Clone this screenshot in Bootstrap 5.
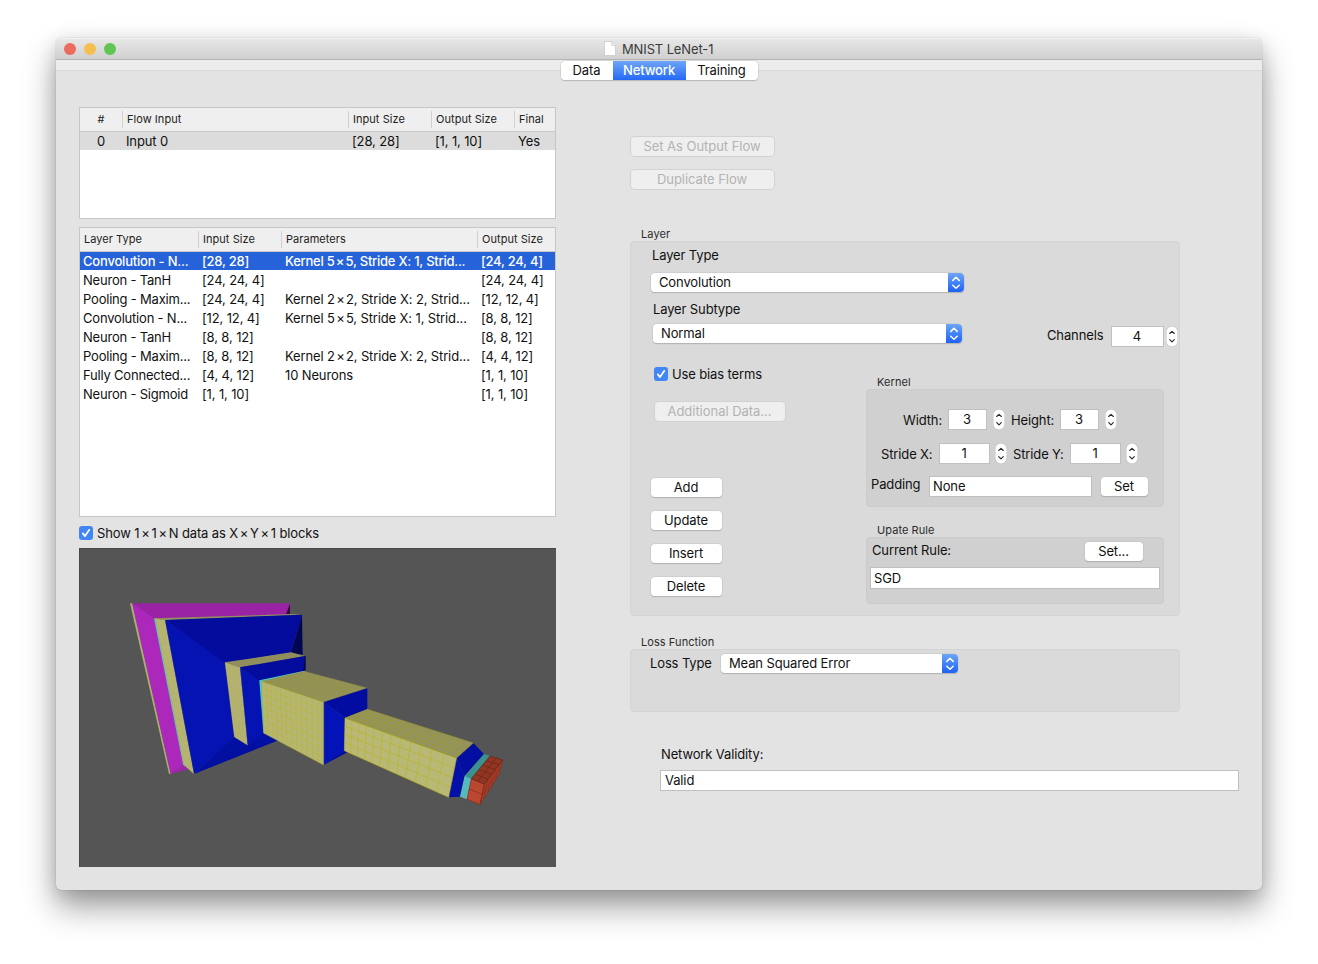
<!DOCTYPE html>
<html lang="en">
<head>
<meta charset="utf-8">
<title>MNIST LeNet-1</title>
<link href="https://cdn.jsdelivr.net/npm/bootstrap@5.3.0/dist/css/bootstrap.min.css" rel="stylesheet">
<style>
body{font:13px/18px Inter,"Liberation Sans",sans-serif;letter-spacing:-.13px;color:#111;background:#fff;height:964px;overflow:hidden;padding:38px 0 0 56px}
.win{width:1206px;height:852px;background:#e3e3e3;border-radius:5px;box-shadow:0 0 1px rgba(0,0,0,.4),0 17px 32px rgba(0,0,0,.38),0 4px 18px rgba(0,0,0,.12)}
.titlebar{height:22px;background:linear-gradient(#e8e8e8,#d0d0d0);border-bottom:1px solid #b4b4b4;border-radius:5px 5px 0 0;padding-left:8px;box-shadow:inset 0 1px #f3f3f3}
.dot{width:12px;height:12px;border-radius:50%}
.title{color:#3b3b3b;margin-left:488px}
.strip{height:11px;background:#ececec;border-bottom:1px solid #d8d8d8}
.seg{height:19px;margin-top:1px;background:#fff;border-radius:4px;box-shadow:0 0 0 .5px #c6c6c6,0 1px 1px rgba(0,0,0,.25);overflow:hidden;z-index:2}
.seg span{height:19px;line-height:19px;text-align:center}
.seg .on{background:linear-gradient(#6ea5f6,#2469f6);color:#fff;font-weight:500}
.left{width:477px;margin:36px 0 0 23px}
.right{width:609px;margin:66px 0 0 74px}
.grid-box{background:#fff;border:1px solid #c6c6c6}
.hd{height:24px;background:#efefef;border-bottom:1px solid #c8c8c8;font-size:11px;letter-spacing:.04px;color:#222}
.rw,.hd{display:grid}
.rw{height:19px;line-height:19px;white-space:nowrap}
.rw>span{overflow:hidden}
.hd>span{line-height:15px;height:17px;margin-top:3px;padding:1px 0 0 4px;border-left:1px solid #d0d0d0;white-space:nowrap}
.hd>span:first-child{border:0}
.rw>span{padding-left:4px}
.flows .hd,.flows .rw{grid-template-columns:42px 226px 83px 83px 41px}
.flows .hd>span:first-child,.flows .rw>span:first-child{padding-left:0}
.layers .hd,.layers .rw{grid-template-columns:118px 83px 196px 78px}
.layers .rw>span:first-child{padding-left:3px}
.layers .rw>span:first-child{letter-spacing:-.2px}
.pick{background:#2662d9;color:#fff;font-weight:500;height:18px;line-height:18px;margin-bottom:1px}
.layers .pick>span{letter-spacing:-.25px}
.gray{background:#dcdcdc;height:18px;line-height:18px}
.rw b{font-weight:inherit;padding:0 1.3px}
.blk b{font-weight:inherit;padding:0 1.8px}
.tick{width:14px;height:14px;flex:none}
.pbtn{height:19px;line-height:18px;background:#fff;border-radius:4px;text-align:center;padding-right:1px;box-shadow:0 0 0 .5px #c4c4c4,0 1px 1px rgba(0,0,0,.25);color:#111}
.pbtn.off{background:#efefef;color:#b3b3b3;box-shadow:0 0 0 1px #d2d2d2;letter-spacing:-.03px}
.inset{background:#dadada;border:1px solid #d4d4d4;border-radius:4px}
.inset .inset{background:#d0d0d0;border-color:#cbcbcb}
.cap{font-size:11px;line-height:14px;color:#2b2b2b;letter-spacing:.07px}
.pop{height:19px;background:#fff;border-radius:4px;box-shadow:0 0 0 .5px #c4c4c4,0 1px 1px rgba(0,0,0,.25);line-height:19px;padding-left:8px;overflow:hidden}
.fld{background:#fff;border:1px solid #c0c0c0;height:21px;line-height:19px;padding-left:3px;flex:none}
.num{text-align:center;padding:0 1px 0 0}
.step{width:12px;height:21px;flex:none}
.lbl{white-space:nowrap;flex:none}
</style>
</head>
<body>
<svg width="0" height="0" class="position-absolute">
<defs>
<linearGradient id="bl" x1="0" y1="0" x2="0" y2="1"><stop offset="0" stop-color="#6ea5f6"/><stop offset="1" stop-color="#1c62f5"/></linearGradient>
<symbol id="arrows" viewBox="0 0 16 19"><rect width="16" height="19" fill="url(#bl)"/><path d="M4.8 7.4 8 4.3l3.2 3.1M4.8 12.2 8 15.3l3.2-3.1" fill="none" stroke="#fff" stroke-width="1.5" stroke-linecap="round" stroke-linejoin="round"/></symbol>
<symbol id="stepper" viewBox="0 0 12 21"><rect x=".2" y=".3" width="11.6" height="20.4" rx="5.4" fill="#fff" stroke="#b5b5b5" stroke-width=".5"/><path d="M3.7 7.5 6 5.3l2.3 2.2M3.7 13.7 6 15.9l2.3-2.2" fill="none" stroke="#2c2c2c" stroke-width="1.15" stroke-linecap="round" stroke-linejoin="round"/></symbol>
<symbol id="check" viewBox="0 0 14 14"><rect width="14" height="14" rx="3" fill="#4286f6"/><path d="M3.8 7.4 6 10.1l4.3-6.3" fill="none" stroke="#fff" stroke-width="1.7" stroke-linecap="round" stroke-linejoin="round"/></symbol>
</defs>
</svg>
<main class="win">
  <header class="titlebar d-flex align-items-center">
    <i class="dot me-2" style="background:#ed6a5e"></i><i class="dot me-2" style="background:#f5bf4f"></i><i class="dot" style="background:#61c554"></i>
    <span class="title d-flex align-items-center"><svg width="12" height="15" viewBox="0 0 12 15" style="margin-right:6px"><path d="M.5.5h7.2l3.8 3.8v10.2H.5z" fill="#fff" stroke="#c6c6c6" stroke-width=".7"/><path d="M7.7.5v3.8h3.8" fill="#eee" stroke="#c6c6c6" stroke-width=".7"/></svg><span>MNIST LeNet-1</span></span>
  </header>
  <nav class="strip d-flex justify-content-center">
    <div class="seg d-flex position-relative"><span style="width:52px">Data</span><span class="on" style="width:73px">Network</span><span style="width:72px">Training</span></div>
  </nav>
  <div class="d-flex">
    <section class="left">
      <div class="grid-box flows" style="height:112px">
        <div class="hd"><span class="text-center">#</span><span>Flow Input</span><span>Input Size</span><span>Output Size</span><span>Final</span></div>
        <div class="rw gray"><span class="text-center">0</span><span>Input 0</span><span>[28, 28]</span><span>[1, 1, 10]</span><span>Yes</span></div>
      </div>
      <div class="grid-box layers" style="height:290px;margin-top:8px">
        <div class="hd"><span>Layer Type</span><span>Input Size</span><span>Parameters</span><span>Output Size</span></div>
        <div class="rw pick"><span>Convolution - N...</span><span>[28, 28]</span><span>Kernel 5<b>×</b>5, Stride X: 1, Strid...</span><span>[24, 24, 4]</span></div>
        <div class="rw"><span>Neuron - TanH</span><span>[24, 24, 4]</span><span></span><span>[24, 24, 4]</span></div>
        <div class="rw"><span>Pooling - Maxim...</span><span>[24, 24, 4]</span><span>Kernel 2<b>×</b>2, Stride X: 2, Strid...</span><span>[12, 12, 4]</span></div>
        <div class="rw"><span>Convolution - N...</span><span>[12, 12, 4]</span><span>Kernel 5<b>×</b>5, Stride X: 1, Strid...</span><span>[8, 8, 12]</span></div>
        <div class="rw"><span>Neuron - TanH</span><span>[8, 8, 12]</span><span></span><span>[8, 8, 12]</span></div>
        <div class="rw"><span>Pooling - Maxim...</span><span>[8, 8, 12]</span><span>Kernel 2<b>×</b>2, Stride X: 2, Strid...</span><span>[4, 4, 12]</span></div>
        <div class="rw"><span>Fully Connected...</span><span>[4, 4, 12]</span><span>10 Neurons</span><span>[1, 1, 10]</span></div>
        <div class="rw"><span>Neuron - Sigmoid</span><span>[1, 1, 10]</span><span></span><span>[1, 1, 10]</span></div>
      </div>
      <div class="d-flex align-items-center" style="height:14px;margin-top:9px"><svg class="tick"><use href="#check"/></svg><span class="lbl blk" style="margin-left:4px">Show 1<b>×</b>1<b>×</b>N data as X<b>×</b>Y<b>×</b>1 blocks</span></div>
      <svg class="d-block" width="477" height="319" viewBox="79 548 477 319" style="margin-top:8px">
        <rect x="79" y="548" width="477" height="319" fill="#555"/><path d="M79.5 867V548.5H556" fill="none" stroke="#484848"/>
        <g transform="translate(110 590) scale(.33333)">
          <path fill="#a9b069" d="M60 40h8l114 512h-5z"/>
          <path fill="#ac28bb" d="M66 40 133 85 222 525 182 552z"/>
          <path fill="#9a22a5" d="M66 40H540L538 74 133 86z"/><path fill="#35083e" d="M540 42v32l-12-2z"/>
          <path fill="#9b28a8" d="m222 522 20 14-60 16z"/>
          <path fill="#5fc4c2" d="M132 85h5l87 445-5-7z"/>
          <path fill="#b5b673" d="m136 85 29 5 87 462-30-27z"/>
          <path fill="#92905f" d="M133 85 545 72l31 2L165 91z"/>
          <path fill="#020fa0" d="M252 552 373 438l90-10 45 22z"/>
          <path fill="#0413b2" d="m165 90 182 127 27 224-122 111z"/>
          <path fill="#030c9c" d="m165 90 411-16-33 114-198 30z"/>
          <path fill="#020552" d="m576 74 2 121-35-7z"/>
          <path fill="#b3b270" d="m345 217 45 15 23 234-40-25z"/>
          <path fill="#908e5c" d="m345 217 198-30 42 11-195 34z"/>
          <path fill="#0413b2" d="m390 232 58 39 15 161-50 34z"/>
          <path fill="#030c9c" d="m390 232 195-34-3 46-134 28z"/><path fill="#020552" d="M584 198h3v42l-7 4z"/>
          <path fill="#0310a4" d="m413 466 49-36 46 20z"/>
          <path fill="#45c3cf" d="m448 271 132-28 12 4-134 28 8 156-6-2z"/>
        </g>
        <g transform="translate(300 640) scale(.33333)">
          <path fill="#b5b673" d="M-115 124 71 186v189l-179-95z"/><path fill="#92925d" d="M-115 124 12 94l190 50-131 42z"/>
          <path fill="#030f98" d="m71 375 64-47 9 8z"/><path fill="#0413b8" d="m71 186 64 48-1 98-63 43z"/><path fill="#030ca0" d="m71 186 131-42v64l-67 26z"/>
          <path fill="#b8b877" d="m135 234 335 120-24 118-313-140z"/><path fill="#93935f" d="m135 234 67-26 318 101-50 45z"/>
          <path fill="#030fa0" d="m470 354 50-45 32 33-58 66z"/><path fill="#0410a8" d="m470 354 24 54-14 62-34 2z"/>
          <path fill="#3b9090" d="m494 408 58-66 18 6-56 68z"/><path fill="#54babb" d="m494 408 20 8-13 62-21-8z"/>
          <path fill="#913622" d="m514 416 56-68 38 12-55 72z"/><path fill="#ba472f" d="m514 416 39 16-13 62-39-16z"/><path fill="#a63d29" d="m553 432 55-72-10 42-58 92z"/>
          <g id="mesh" fill="none"></g>
        </g>
      </svg>
    </section>

    <section class="right">
      <div class="pbtn off" style="width:143px;margin-left:1px">Set As Output Flow</div>
      <div class="pbtn off" style="width:143px;margin:14px 0 0 1px">Duplicate Flow</div>
      <div class="cap" style="margin:38px 0 0 11px">Layer</div>
      <div class="inset d-flex" style="width:550px;height:375px">
        <div style="width:335px;padding:4px 0 0 20px">
          <div class="lbl" style="margin-left:1px">Layer Type</div>
          <div class="pop d-flex justify-content-between" style="width:313px;margin-top:9px"><span>Convolution</span><svg width="16" height="19"><use href="#arrows"/></svg></div>
          <div class="lbl" style="margin:8px 0 0 2px">Layer Subtype</div>
          <div class="pop d-flex justify-content-between" style="width:309px;margin:6px 0 0 2px"><span>Normal</span><svg width="16" height="19"><use href="#arrows"/></svg></div>
          <div class="d-flex align-items-center" style="height:14px;margin:24px 0 0 3px"><svg class="tick"><use href="#check"/></svg><span class="lbl" style="margin-left:4px">Use bias terms</span></div>
          <div class="pbtn off" style="width:130px;margin:21px 0 0 4px">Additional Data...</div>
          <div class="d-grid" style="width:71px;gap:14px;margin-top:57px">
            <div class="pbtn">Add</div><div class="pbtn">Update</div><div class="pbtn">Insert</div><div class="pbtn">Delete</div>
          </div>
        </div>
        <div style="width:213px;margin-left:-100px;flex:1">
          <div class="d-flex align-items-center" style="margin:84px 0 0 181px;height:21px"><span class="lbl pb-1" style="width:64px;line-height:16px">Channels</span><span class="fld num" style="width:53px">4</span><svg class="step" style="margin-left:2px"><use href="#stepper"/></svg></div>
          <div class="cap" style="margin:28px 0 0 11px">Kernel</div>
          <div class="inset" style="width:298px;height:118px;padding-top:19px">
            <div class="d-flex align-items-center" style="margin-left:36px"><span class="lbl" style="width:45px">Width:</span><span class="fld num" style="width:39px">3</span><svg class="step" style="margin:0 6px"><use href="#stepper"/></svg><span class="lbl" style="width:49px">Height:</span><span class="fld num" style="width:39px">3</span><svg class="step" style="margin-left:6px"><use href="#stepper"/></svg></div>
            <div class="d-flex align-items-center" style="margin:13px 0 0 14px"><span class="lbl" style="width:58px">Stride X:</span><span class="fld num" style="width:51px">1</span><svg class="step" style="margin:0 6px 0 5px"><use href="#stepper"/></svg><span class="lbl" style="width:57px">Stride Y:</span><span class="fld num" style="width:51px">1</span><svg class="step" style="margin-left:5px"><use href="#stepper"/></svg></div>
            <div class="d-flex" style="margin:12px 0 0 4px"><span class="lbl" style="width:58px;line-height:16px">Padding</span><span class="fld" style="width:163px">None</span><div class="pbtn" style="width:47px;margin:1px 0 0 9px">Set</div></div>
          </div>
          <div class="cap" style="margin:16px 0 0 11px">Upate Rule</div>
          <div class="inset" style="width:298px;height:67px;padding:4px 3px">
            <div class="d-flex justify-content-between" style="padding:0 17px 0 2px;height:25px"><span class="lbl" style="line-height:16px">Current Rule:</span><div class="pbtn" style="width:58px">Set...</div></div>
            <div class="fld" style="width:290px;height:22px;line-height:21px">SGD</div>
          </div>
        </div>
      </div>
      <div class="cap" style="margin:19px 0 0 11px">Loss Function</div>
      <div class="inset d-flex" style="width:550px;height:63px;padding:4px 0 0 19px"><span class="lbl" style="width:71px">Loss Type</span><div class="pop d-flex justify-content-between" style="width:237px"><span>Mean Squared Error</span><svg width="16" height="19"><use href="#arrows"/></svg></div></div>
      <div class="lbl" style="margin:33px 0 0 31px">Network Validity:</div>
      <div class="fld" style="width:579px;margin:7px 0 0 30px;padding-left:4px">Valid</div>
    </section>
  </div>
</main>
<script src="https://cdn.jsdelivr.net/npm/bootstrap@5.3.0/dist/js/bootstrap.bundle.min.js"></script>
<script>
// Cell lines over the faces of the data blocks; k > 1 widens cells towards the viewer.
const mix = (p, q, t) => [p[0] + (q[0] - p[0]) * t, p[1] + (q[1] - p[1]) * t];
function face(a, b, c, d, cols, rows, k, stroke, opacity) {
  let path = '';
  for (let i = 0; i <= cols; i++) {
    const u = i / cols, t = u / (k + (1 - k) * u);
    path += `M${mix(a, b, t)}L${mix(d, c, t)}`;
  }
  for (let j = 0; j <= rows; j++) path += `M${mix(a, d, j / rows)}L${mix(b, c, j / rows)}`;
  const el = document.createElementNS('http://www.w3.org/2000/svg', 'path');
  el.setAttribute('d', path); el.setAttribute('stroke', stroke);
  el.setAttribute('stroke-width', 1.8); el.setAttribute('opacity', opacity);
  document.getElementById('mesh').append(el);
}
face([-434,-65],[-405,-60],[-318,402],[-348,375],4,24,1,'#b9a95a',.3);
face([-225,67],[-180,82],[-157,316],[-197,291],4,12,1,'#b9a95a',.35);
face([-115,124],[71,186],[71,375],[-108,280],12,8,1.15,'#bdb31c',.75);
face([-115,124],[71,186],[202,144],[12,94],12,8,1.15,'#9c951f',.4);
face([135,234],[470,354],[446,472],[133,332],12,4,1.4,'#bdb315',.9);
face([135,234],[470,354],[520,309],[202,208],12,4,1.4,'#a39b10',.8);
face([514,416],[553,432],[608,360],[570,348],2,5,1,'#5c1c0e',.8);
face([514,416],[553,432],[540,494],[501,478],1,2,1,'#6f2213',.8);
face([553,432],[608,360],[598,402],[540,494],5,2,1,'#7c2716',.7);
</script>
</body>
</html>
